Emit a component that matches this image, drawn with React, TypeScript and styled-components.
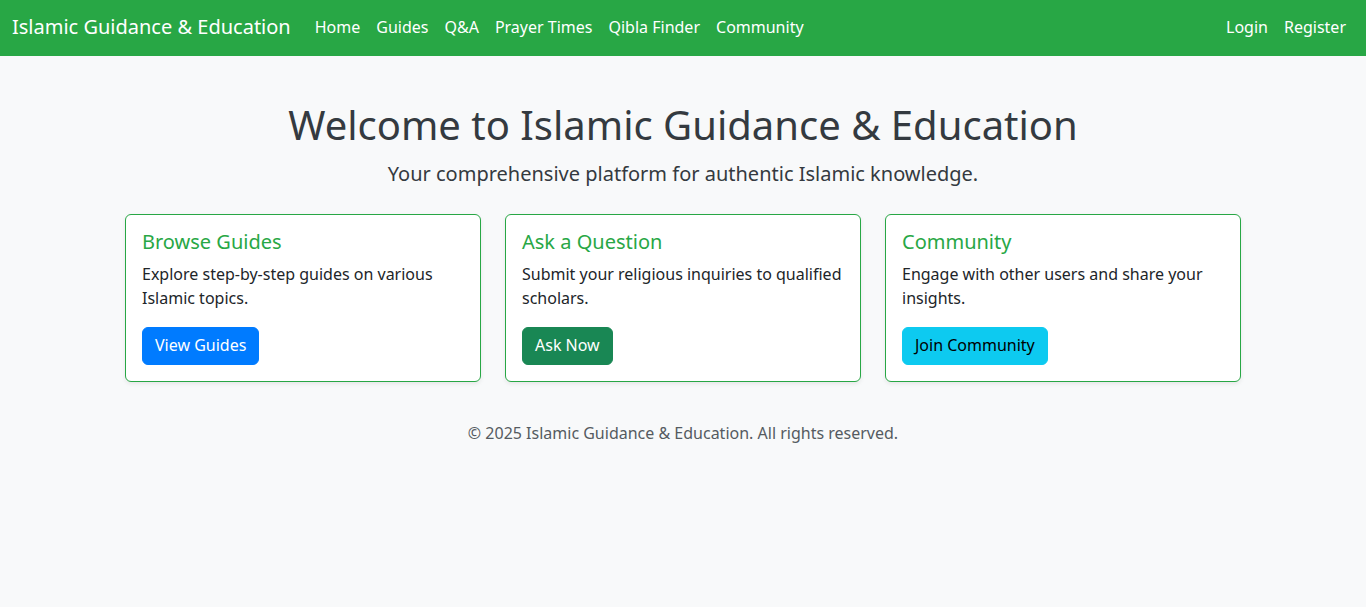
import React from "react";
import styled, { createGlobalStyle } from "styled-components";

const Global = createGlobalStyle`
  *, *::before, *::after { box-sizing: border-box; }
  body {
    margin: 0;
    font-family: "Noto Sans", "Liberation Sans", sans-serif;
    font-size: 16px;
    line-height: 1.5;
    color: #212529;
    background: #f8f9fa;
  }
`;

const Navbar = styled.nav`
  height: 56px;
  background: #28a745;
  display: flex;
  align-items: center;
  padding: 0 12px 2px;
`;

const Brand = styled.a`
  font-size: 20px;
  color: #fff;
  text-decoration: none;
  margin-right: 16px;
  line-height: 30px;
`;

const NavList = styled.div<{ $end?: boolean }>`
  display: flex;
  margin-left: ${(p) => (p.$end ? "auto" : "0")};
`;

const NavLink = styled.a`
  color: #fff;
  text-decoration: none;
  font-size: 16px;
  padding: 8px 8px;
  line-height: 24px;
`;

const Main = styled.main`
  max-width: 1140px;
  margin: 0 auto;
  padding: 45px 12px 0;
`;

const Hero = styled.section`
  text-align: center;
  margin-bottom: 25px;
`;

const Title = styled.h1`
  font-size: 40px;
  font-weight: 400;
  line-height: 1.2;
  color: #343a40;
  margin: 0 0 10px;
`;

const Lead = styled.p`
  font-size: 20px;
  font-weight: 400;
  color: #343a40;
  margin: 0;
  line-height: 30px;
`;

const Row = styled.div`
  display: grid;
  grid-template-columns: repeat(3, 1fr);
  gap: 24px;
`;

const Card = styled.div`
  background: #fff;
  border: 1px solid #28a745;
  border-radius: 6px;
  box-shadow: 0 2px 4px rgba(0, 0, 0, 0.075);
  padding: 15px 16px 16px;
`;

const CardTitle = styled.h5`
  font-size: 20px;
  font-weight: 400;
  line-height: 1.2;
  color: #28a745;
  margin: 0 0 8px;
`;

const CardText = styled.p`
  margin: 0 0 17px;
  font-size: 16px;
  line-height: 24px;
`;

const Button = styled.a<{ $bg: string; $fg: string }>`
  display: inline-block;
  padding: 5px 12px 7px;
  font-size: 16px;
  line-height: 24px;
  border: 1px solid ${(p) => p.$bg};
  border-radius: 6px;
  background: ${(p) => p.$bg};
  color: ${(p) => p.$fg};
  text-decoration: none;
`;

const Footer = styled.footer`
  text-align: center;
  color: #555b61;
  padding: 39px 0 16px;
  font-size: 16px;
  line-height: 24px;
`;

const cards = [
  {
    title: "Browse Guides",
    text: "Explore step-by-step guides on various Islamic topics.",
    btn: "View Guides",
    bg: "#007bff",
    fg: "#fff",
  },
  {
    title: "Ask a Question",
    text: "Submit your religious inquiries to qualified scholars.",
    btn: "Ask Now",
    bg: "#198754",
    fg: "#fff",
  },
  {
    title: "Community",
    text: "Engage with other users and share your insights.",
    btn: "Join Community",
    bg: "#0dcaf0",
    fg: "#000",
  },
];

export default function App() {
  return (
    <>
      <Global />
      <Navbar>
        <Brand href="#">Islamic Guidance &amp; Education</Brand>
        <NavList>
          {["Home", "Guides", "Q&A", "Prayer Times", "Qibla Finder", "Community"].map((l) => (
            <NavLink key={l} href="#">{l}</NavLink>
          ))}
        </NavList>
        <NavList $end>
          <NavLink href="#">Login</NavLink>
          <NavLink href="#">Register</NavLink>
        </NavList>
      </Navbar>
      <Main>
        <Hero>
          <Title>Welcome to Islamic Guidance &amp; Education</Title>
          <Lead>Your comprehensive platform for authentic Islamic knowledge.</Lead>
        </Hero>
        <Row>
          {cards.map((c) => (
            <Card key={c.title}>
              <CardTitle>{c.title}</CardTitle>
              <CardText>{c.text}</CardText>
              <Button href="#" $bg={c.bg} $fg={c.fg}>{c.btn}</Button>
            </Card>
          ))}
        </Row>
        <Footer>© 2025 Islamic Guidance &amp; Education. All rights reserved.</Footer>
      </Main>
    </>
  );
}
